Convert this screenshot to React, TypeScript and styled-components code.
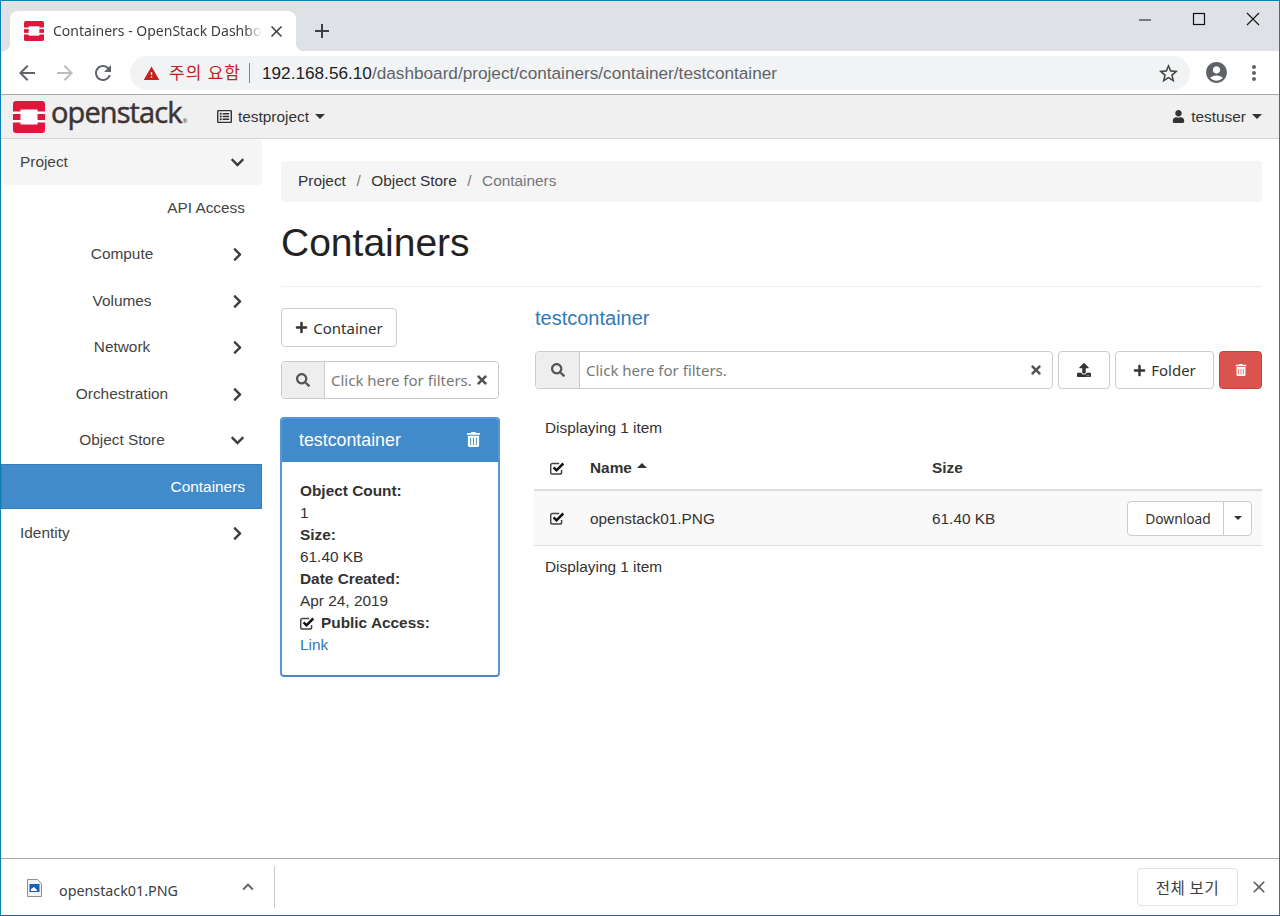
import React from "react";
import styled, { createGlobalStyle } from "styled-components";
import {
  FaChevronDown, FaChevronRight, FaPlus, FaRegListAlt, FaSearch,
  FaTimes, FaTrashAlt, FaUpload, FaUser,
} from "react-icons/fa";
import { MdAccountCircle, MdAdd, MdArrowBack, MdArrowForward, MdClose, MdKeyboardArrowUp, MdMoreVert, MdRefresh, MdStarBorder, MdWarning } from "react-icons/md";

const Global = createGlobalStyle`
  html, body { margin: 0; padding: 0; background: #fff; }
  * { box-sizing: border-box; }
  body { font-family: "Liberation Sans", Arial, sans-serif; font-size: 15.4px; line-height: 22px; color: #333; }
`;

const UI = `"Noto Sans", "Noto Sans CJK KR", sans-serif`;

const Frame = styled.div`
  width: 1280px; height: 916px; border: 1px solid #0e7fb5; border-bottom-color: #0b6f9c; display: flex; flex-direction: column; overflow: hidden;
`;
const TitleBar = styled.div`
  height: 50px; flex: none; background: #dee1e6; display: flex; align-items: flex-start; padding-left: 9px;
`;
const Tab = styled.div`
  position: relative; margin-top: 10px; width: 286px; height: 40px; background: #fff; border-radius: 8px 8px 0 0;
  display: flex; align-items: center; padding-left: 14px; font-family: ${UI}; font-size: 14px; color: #3c4043;
  &::before, &::after { content: ""; position: absolute; bottom: 0; width: 8px; height: 8px; }
  &::before { left: -8px; background: radial-gradient(circle at 0 0, transparent 8px, #fff 8.5px); }
  &::after { right: -8px; background: radial-gradient(circle at 100% 0, transparent 8px, #fff 8.5px); }
`;
const TabLabel = styled.span`
  margin-left: 9px; width: 210px; white-space: nowrap; overflow: hidden; color: #3c4043;
  -webkit-mask-image: linear-gradient(to right, #000 192px, transparent 209px);
`;
const TabClose = styled.span`
  display: flex; margin-left: 4px; color: #3c4043; font-size: 19px;
`;
const NewTab = styled.span`
  display: flex; margin: 8px 0 0 14px; padding-top: 10px; font-size: 24px; color: #3c4043; height: 26px;
`;
const WindowControls = styled.div`
  margin-left: auto; display: flex; align-items: center; height: 35px; padding-right: 18px; gap: 38px;
`;
const Toolbar = styled.div`
  height: 44px; flex: none; background: #fff; display: flex; align-items: center; border-bottom: 1px solid #a9a9a9;
`;
const NavIcon = styled.span<{ $c?: string; $w?: number; $s?: number }>`
  width: ${(p) => p.$w ?? 38}px; display: flex; justify-content: center; color: ${(p) => p.$c ?? "#5f6368"}; font-size: ${(p) => p.$s ?? 24}px;
`;
const NavIcons = styled.div`
  display: flex; padding-left: 7px; width: 129px;
`;
const Omnibox = styled.div`
  width: 1060px; height: 34px; border-radius: 17px; background: #f1f3f4; display: flex; align-items: center; padding: 1px 0 0 13px; font-size: 17.2px; color: #202124;
`;
const Warn = styled.span`
  display: flex; color: #c5221f; font-size: 17px; width: 26px;
`;
const WarnText = styled.span`
  font-family: ${UI}; font-size: 17px; color: #c5221f; letter-spacing: 1px;
`;
const Sep = styled.span`
  width: 1px; height: 20px; background: #80868b; margin: 0 12px 0 8px;
`;
const Host = styled.span`color: #202124;`;
const UrlPath = styled.span`color: #5f6368;`;
const Star = styled.span`
  margin-left: auto; margin-right: 10px; display: flex; font-size: 23px; color: #444;
`;
const NavBar = styled.div`
  height: 44px; flex: none; background: #f0f0f0; border-bottom: 1px solid #d4d4d4; display: flex; align-items: center; padding-left: 12px; padding-right: 17px;
`;
const Brand = styled.div`
  display: flex; align-items: center; width: 204px; gap: 6px;
`;
const BrandText = styled.span`
  font-family: "Open Sans", sans-serif; font-size: 29px; color: #3c3534; letter-spacing: -0.9px; line-height: 32px; -webkit-text-stroke: 0.5px #3c3534;
`;
const BrandMark = styled.sup`
  font-size: 6px; letter-spacing: 0; margin-left: 1px; vertical-align: baseline; -webkit-text-stroke: 0;
`;
const NavMenu = styled.div`
  display: flex; align-items: center; gap: 6px; color: #333; font-size: 15.4px;
`;
const Caret = styled.span<{ $up?: boolean; $size?: number }>`
  display: inline-block; width: 0; height: 0; flex: none;
  border-left: ${(p) => p.$size ?? 5}px solid transparent; border-right: ${(p) => p.$size ?? 5}px solid transparent;
  ${(p) => (p.$up ? "border-bottom" : "border-top")}: ${(p) => p.$size ?? 5}px solid #333;
`;
const Spacer = styled.div`flex: 1;`;
const Page = styled.div`
  flex: 1; display: flex; min-height: 0;
`;
const Sidebar = styled.div`
  width: 261px; flex: none; display: flex; flex-direction: column;
`;
const SideItem = styled.div<{ $kind?: "head" | "active" }>`
  height: ${(p) => (p.$kind === "active" ? 45.6 : 46.4)}px; display: flex; align-items: center; padding-left: 19px; color: #444; position: relative;
  ${(p) => p.$kind === "head" && `background: #f5f5f5; margin-left: 2px; padding-left: 17px; border-radius: 0 0 4px 4px;`}
  ${(p) => p.$kind === "active" && `background: #428bca; color: #fff; border: 1px solid #357ebd; padding-left: 18px; margin-bottom: 0.8px;`}
`;
const SideLabel = styled.span<{ $align?: string; $flush?: boolean }>`
  width: ${(p) => (p.$align === "right" ? 225 : 204)}px; text-align: ${(p) => p.$align ?? "left"}; flex: none; padding-bottom: ${(p) => (p.$flush ? 0 : 1)}px;
`;
const SideChevron = styled.span`
  display: flex; margin-left: auto; margin-right: 17px; font-size: 15px; color: #3d3d3d;
`;
const Main = styled.div`
  flex: 1; padding: 22px 17px 0 19px; min-width: 0;
`;
const Breadcrumb = styled.div`
  height: 41px; background: #f5f5f5; border-radius: 4px; display: flex; align-items: center; padding: 0 0 2px 17px; color: #333;
`;
const CrumbSep = styled.span`color: #777; margin: 0 10.5px;`;
const CrumbLast = styled.span`color: #777;`;
const PageHeader = styled.div`
  height: 85px; border-bottom: 1px solid #eee; display: flex; align-items: flex-start;
`;
const Title = styled.h1`
  margin: 19px 0 0; font-weight: 400; font-size: 39px; line-height: 44px; color: #222;
`;
const Columns = styled.div`
  display: flex; margin-top: 21px; gap: 36px;
`;
const LeftCol = styled.div`
  width: 218px; flex: none; display: flex; flex-direction: column; align-items: flex-start;
`;
const RightCol = styled.div`
  flex: 1; min-width: 0;
`;
const Btn = styled.button<{ $danger?: boolean; $w?: number; $h?: number }>`
  height: ${(p) => p.$h ?? 39}px; width: ${(p) => (p.$w ? `${p.$w}px` : "auto")}; flex: none; padding: 0; border: 1px solid ${(p) => (p.$danger ? "#d43f3a" : "#ccc")}; border-radius: 4px;
  background: ${(p) => (p.$danger ? "#d9534f" : "#fff")}; color: ${(p) => (p.$danger ? "#fff" : "#333")};
  font-family: ${UI}; font-size: 15px; display: flex; align-items: center; justify-content: center; gap: 5px;
`;
const Filter = styled.div<{ $w?: string; $top?: number }>`
  width: ${(p) => p.$w ?? "100%"}; height: 38px; margin-top: ${(p) => p.$top ?? 0}px; display: flex; border: 1px solid #ccc; border-radius: 4px; overflow: hidden; flex: none;
`;
const FilterAddon = styled.span<{ $w: number }>`
  width: ${(p) => p.$w}px; flex: none; background: #eee; border-right: 1px solid #ccc; display: flex; align-items: center; justify-content: center; color: #555; font-size: 14px;
`;
const FilterText = styled.span`
  flex: 1; font-family: ${UI}; font-size: 15px; color: #777; display: flex; align-items: center; padding-left: 6px; white-space: nowrap;
`;
const FilterClear = styled.span`
  display: flex; align-items: center; font-size: 14px; color: #555; padding-right: 9px;
`;
const Card = styled.div`
  width: 220px; height: 260px; margin: 18px 0 0 -1px; border: 2px solid #5a95d8; border-bottom-color: #4a86cc; border-radius: 4px; overflow: hidden;
`;
const CardHead = styled.div`
  height: 43px; padding: 0 17px 2px; background: #428bca; color: #fff; display: flex; align-items: center; justify-content: space-between; font-size: 17.8px;
`;
const CardTrash = styled.span`
  display: flex; font-size: 15px; margin-bottom: 1px;
`;
const CardBody = styled.dl`
  margin: 0; padding: 18px 18px 0; color: #333;
`;
const Term = styled.dt`
  font-weight: 700; display: flex; align-items: center; gap: 6px;
`;
const Desc = styled.dd`margin: 0;`;
const Link = styled.a`color: #337ab7;`;
const Heading = styled.div`
  font-size: 20px; line-height: 20px; color: #337ab7; margin-bottom: 23px;
`;
const ObjBar = styled.div`
  display: flex; gap: 5px;
`;
const Count = styled.div<{ $h: number; $top?: number }>`
  height: ${(p) => p.$h}px; padding: ${(p) => p.$top ?? 0}px 0 0 10px; display: flex; align-items: center; color: #333;
`;
const Table = styled.div`margin-left: -1px;`;
const Row = styled.div<{ $head?: boolean }>`
  display: grid; grid-template-columns: 56px 342px 1fr auto; align-items: center; padding-right: 10px;
  ${(p) => p.$head
    ? `height: 41px; padding-bottom: 3px; border-bottom: 2px solid #ddd; font-weight: 700;`
    : `height: 55px; padding-top: 1px; border-bottom: 1px solid #ddd; background: #f9f9f9;`}
`;
const Check = styled.span`
  display: flex; justify-content: flex-start; padding-left: 16px;
`;
const NameHead = styled.span`
  display: flex; align-items: center; gap: 5px;
`;
const SortCaret = styled.span`
  display: flex; margin-top: -5px;
`;
const SplitGroup = styled.div`
  display: flex; height: 35px; margin-top: -1px;
`;
const SplitMain = styled.button`
  width: 97px; border: 1px solid #ccc; border-radius: 4px 0 0 4px; background: #fff; font-family: ${UI}; font-size: 13.8px; color: #333; padding: 0 0 0 5px;
`;
const SplitCaret = styled.button`
  width: 29px; margin-left: -1px; border: 1px solid #ccc; border-radius: 0 4px 4px 0; background: #fff; display: flex; align-items: center; justify-content: center; padding: 0;
`;
const Shelf = styled.div`
  height: 57px; flex: none; background: #fff; border-top: 1px solid #a9a9a9; display: flex; align-items: center; padding-left: 26px; padding-right: 10px; font-family: ${UI};
`;
const ShelfFileIcon = styled.span`
  display: flex; margin-top: 2px;
`;
const ShelfFile = styled.span`
  font-size: 14.3px; color: #3c4043; margin-left: 17px; margin-top: 8px; width: 178px;
`;
const ShelfChevron = styled.span`
  display: flex; font-size: 22px; color: #5f6368; width: 37px;
`;
const ShelfDivider = styled.span`
  width: 1px; height: 42px; background: #c8c8c8;
`;
const ShelfAll = styled.button`
  width: 101px; height: 38px; background: #fff; border: 1px solid #e0e2e5; border-radius: 4px; font-family: "Noto Sans CJK KR", sans-serif; font-size: 15.5px; letter-spacing: 0.6px; color: #3c4043; padding: 0;
`;
const ShelfClose = styled.span`
  display: flex; font-size: 20px; color: #5f6368; margin-left: 11px;
`;

const Logo = ({ s }: { s: number }) => (
  <svg width={s} height={s} viewBox="0 0 32 32">
    <rect width="32" height="32" rx="3" fill="#e1163c" />
    <rect x="7.5" y="8.5" width="17" height="15" fill="#fff" />
    <rect x="0" y="10.5" width="8" height="2.5" fill="#fff" />
    <rect x="0" y="19" width="8" height="2.5" fill="#fff" />
    <rect x="24" y="10.5" width="8" height="2.5" fill="#fff" />
    <rect x="24" y="19" width="8" height="2.5" fill="#fff" />
  </svg>
);
const FileIcon = () => (
  <svg width="15" height="18" viewBox="0 0 15 18">
    <path fill="#f2f2f6" stroke="#8a8fa0" d="M.5.5h10l4 4v13H.5z" />
    <rect x="2.5" y="5" width="10" height="8" fill="#1c5fb8" />
    <path fill="#fff" d="M4 10l3-2 3 3v1H4z" />
  </svg>
);
const CheckIcon = () => (
  <svg width="15" height="13" viewBox="0 0 15 13">
    <path fill="none" stroke="#444" strokeWidth="1.5" d="M11.6 8v2.2a1.9 1.9 0 0 1-1.9 1.9H2.6a1.9 1.9 0 0 1-1.9-1.9V3.4a1.9 1.9 0 0 1 1.9-1.9h6.6" />
    <path fill="none" stroke="#111" strokeWidth="2.5" d="M3.6 5.4l2.9 2.9 6.8-6.8" />
  </svg>
);

const sideItems: { t: string; align?: string; chev?: "d" | "r"; kind?: "head" | "active" }[] = [
  { t: "Project", chev: "d", kind: "head" },
  { t: "API Access", align: "right" },
  { t: "Compute", align: "center", chev: "r" },
  { t: "Volumes", align: "center", chev: "r" },
  { t: "Network", align: "center", chev: "r" },
  { t: "Orchestration", align: "center", chev: "r" },
  { t: "Object Store", align: "center", chev: "d" },
  { t: "Containers", align: "right", kind: "active" },
  { t: "Identity", chev: "r" },
];

export default function App() {
  return (
    <>
      <Global />
      <Frame>
        <TitleBar>
          <Tab>
            <Logo s={20} />
            <TabLabel>Containers - OpenStack Dashboard</TabLabel>
            <TabClose><MdClose /></TabClose>
          </Tab>
          <NewTab><MdAdd /></NewTab>
          <WindowControls>
            <svg width="16" height="16" viewBox="0 0 16 16"><path d="M2 9h12" stroke="#111" strokeWidth="1" /></svg>
            <svg width="16" height="16" viewBox="0 0 16 16"><rect x="2.5" y="2.5" width="11" height="11" fill="none" stroke="#111" strokeWidth="1.2" /></svg>
            <svg width="16" height="16" viewBox="0 0 16 16"><path d="M2 2l12 12M14 2L2 14" stroke="#111" strokeWidth="1.1" /></svg>
          </WindowControls>
        </TitleBar>
        <Toolbar>
          <NavIcons>
            <NavIcon><MdArrowBack /></NavIcon>
            <NavIcon $c="#babcbe"><MdArrowForward /></NavIcon>
            <NavIcon><MdRefresh /></NavIcon>
          </NavIcons>
          <Omnibox>
            <Warn><MdWarning /></Warn>
            <WarnText>주의 요함</WarnText>
            <Sep />
            <Host>192.168.56.10</Host><UrlPath>/dashboard/project/containers/container/testcontainer</UrlPath>
            <Star><MdStarBorder /></Star>
          </Omnibox>
          <NavIcon $w={52} $s={25} $c="#5f6368"><MdAccountCircle /></NavIcon>
          <NavIcon $w={24} $c="#5f6368"><MdMoreVert /></NavIcon>
        </Toolbar>
        <NavBar>
          <Brand>
            <Logo s={32} />
            <BrandText>openstack<BrandMark>®</BrandMark></BrandText>
          </Brand>
          <NavMenu><FaRegListAlt size={15} /> testproject <Caret /></NavMenu>
          <Spacer />
          <NavMenu><FaUser size={13} /> testuser <Caret /></NavMenu>
        </NavBar>
        <Page>
          <Sidebar>
            {sideItems.map((it) => (
              <SideItem key={it.t} $kind={it.kind}>
                <SideLabel $align={it.align} $flush={it.kind === "active"}>{it.t}</SideLabel>
                {it.chev && <SideChevron>{it.chev === "d" ? <FaChevronDown /> : <FaChevronRight />}</SideChevron>}
              </SideItem>
            ))}
          </Sidebar>
          <Main>
            <Breadcrumb>
              Project<CrumbSep>/</CrumbSep>Object Store<CrumbSep>/</CrumbSep><CrumbLast>Containers</CrumbLast>
            </Breadcrumb>
            <PageHeader><Title>Containers</Title></PageHeader>
            <Columns>
              <LeftCol>
                <Btn $w={116}><FaPlus size={13} /> Container</Btn>
                <Filter $top={14}>
                  <FilterAddon $w={43}><FaSearch /></FilterAddon>
                  <FilterText>Click here for filters.</FilterText>
                  <FilterClear><FaTimes /></FilterClear>
                </Filter>
                <Card>
                  <CardHead>testcontainer<CardTrash><FaTrashAlt /></CardTrash></CardHead>
                  <CardBody>
                    <Term>Object Count:</Term><Desc>1</Desc>
                    <Term>Size:</Term><Desc>61.40 KB</Desc>
                    <Term>Date Created:</Term><Desc>Apr 24, 2019</Desc>
                    <Term><CheckIcon />Public Access:</Term><Desc><Link>Link</Link></Desc>
                  </CardBody>
                </Card>
              </LeftCol>
              <RightCol>
                <Heading>testcontainer</Heading>
                <ObjBar>
                  <Filter $w="518px">
                    <FilterAddon $w={44}><FaSearch /></FilterAddon>
                    <FilterText>Click here for filters.</FilterText>
                    <FilterClear><FaTimes /></FilterClear>
                  </Filter>
                  <Btn $w={52} $h={38}><FaUpload size={14} /></Btn>
                  <Btn $w={99} $h={38}><FaPlus size={13} /> Folder</Btn>
                  <Btn $w={43} $h={38} $danger><FaTrashAlt size={12} /></Btn>
                </ObjBar>
                <Count $h={61} $top={17}>Displaying 1 item</Count>
                <Table>
                  <Row $head>
                    <Check><CheckIcon /></Check>
                    <NameHead>Name <SortCaret><Caret $up /></SortCaret></NameHead>
                    <span>Size</span>
                    <span />
                  </Row>
                  <Row>
                    <Check><CheckIcon /></Check>
                    <span>openstack01.PNG</span>
                    <span>61.40 KB</span>
                    <SplitGroup>
                      <SplitMain>Download</SplitMain>
                      <SplitCaret><Caret $size={4.5} /></SplitCaret>
                    </SplitGroup>
                  </Row>
                </Table>
                <Count $h={42}>Displaying 1 item</Count>
              </RightCol>
            </Columns>
          </Main>
        </Page>
        <Shelf>
          <ShelfFileIcon><FileIcon /></ShelfFileIcon>
          <ShelfFile>openstack01.PNG</ShelfFile>
          <ShelfChevron><MdKeyboardArrowUp /></ShelfChevron>
          <ShelfDivider />
          <Spacer />
          <ShelfAll>전체 보기</ShelfAll>
          <ShelfClose><MdClose /></ShelfClose>
        </Shelf>
      </Frame>
    </>
  );
}
